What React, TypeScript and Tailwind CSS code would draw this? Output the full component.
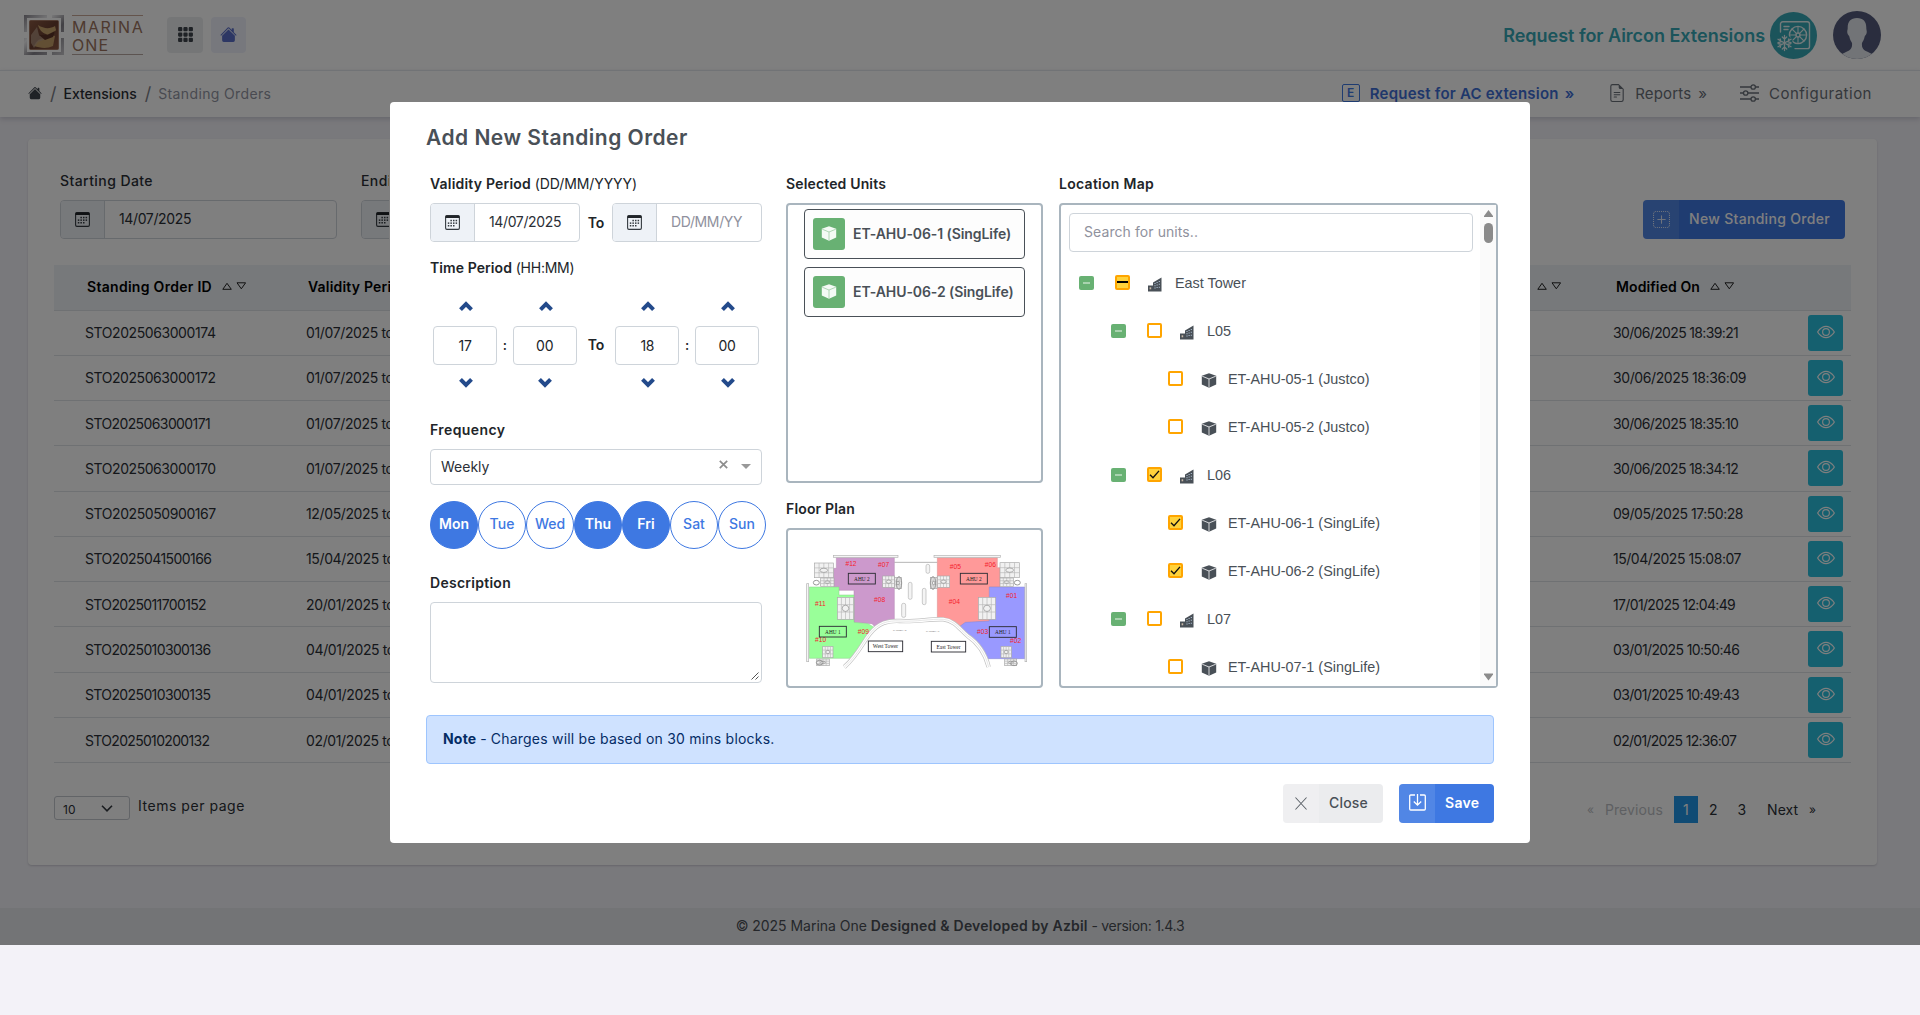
import React from "react";
import { BsGrid3X3GapFill, BsHouseFill, BsFileEarmarkText, BsEye, BsPlusSquareDotted } from "react-icons/bs";

const rows: [string, string, string, string, string][] = [
  ["STO2025063000174", "tracking-[-0.42px]", "01/07/2025 to", "30/06/2025 18:39:21", "tracking-[-0.65px]"],
  ["STO2025063000172", "tracking-[-0.44px]", "01/07/2025 to", "30/06/2025 18:36:09", "tracking-[-0.4px]"],
  ["STO2025063000171", "tracking-[-0.6px]", "01/07/2025 to", "30/06/2025 18:35:10", "tracking-[-0.65px]"],
  ["STO2025063000170", "tracking-[-0.43px]", "01/07/2025 to", "30/06/2025 18:34:12", "tracking-[-0.67px]"],
  ["STO2025050900167", "tracking-[-0.42px]", "12/05/2025 to", "09/05/2025 17:50:28", "tracking-[-0.48px]"],
  ["STO2025041500166", "tracking-[-0.55px]", "15/04/2025 to", "15/04/2025 15:08:07", "tracking-[-0.46px]"],
  ["STO2025011700152", "tracking-[-0.63px]", "20/01/2025 to", "17/01/2025 12:04:49", "tracking-[-0.65px]"],
  ["STO2025010300136", "tracking-[-0.62px]", "04/01/2025 to", "03/01/2025 10:50:46", "tracking-[-0.62px]"],
  ["STO2025010300135", "tracking-[-0.62px]", "04/01/2025 to", "03/01/2025 10:49:43", "tracking-[-0.65px]"],
  ["STO2025010200132", "tracking-[-0.68px]", "02/01/2025 to", "02/01/2025 12:36:07", "tracking-[-0.7px]"],
];

function CalendarIcon() {
  return (
    <svg width="15" height="15" viewBox="0 0 15 15">
      <rect x="0.6" y="0.6" width="13.8" height="13.8" rx="1.3" fill="none" stroke="#343a40" strokeWidth="1.1" />
      <path d="M0.5 1.5a1 1 0 0 1 1-1h12a1 1 0 0 1 1 1V3H0.5z" fill="#212529" />
      <g fill="#343a40">
        {[5.4, 8, 10.6].map((x) => <rect key={x} x={x} y="4.8" width="1.5" height="1.5" />)}
        {[2.8, 5.4, 8, 10.6].map((x) => <rect key={x} x={x} y="7.4" width="1.5" height="1.5" />)}
        {[2.8, 5.4, 8].map((x) => <rect key={x} x={x} y="10" width="1.5" height="1.5" />)}
      </g>
    </svg>
  );
}

function DateInput({ width, value, muted }: { width: string; value: string; muted?: boolean }) {
  return (
    <div className={`flex h-[39px] shrink-0 overflow-hidden rounded border border-[#ced4da] bg-white ${width}`}>
      <div className="flex w-11 items-center justify-center border-r border-[#ced4da] bg-[#eef2f7]">
        <CalendarIcon />
      </div>
      <div className={`pl-[14px] leading-[36px] tracking-[-0.37px] ${muted ? "text-[#8f919d]" : "text-[#2b2f36]"}`}>{value}</div>
    </div>
  );
}

function SortIcons() {
  return (
    <svg width="24" height="9" viewBox="0 0 24 9" fill="none" stroke="#222" strokeWidth="1">
      <path d="M5 1.3L9.3 7.3H0.8z" />
      <path d="M15 0.8h8.6L19.3 6.8z" />
    </svg>
  );
}

function Logo() {
  return (
    <svg width="40" height="40" viewBox="0 0 40 40">
      <defs>
        <linearGradient id="silver" x1="0" y1="0" x2="1" y2="1">
          <stop offset="0" stopColor="#8d8a92" /><stop offset="0.35" stopColor="#f2f2f4" /><stop offset="0.6" stopColor="#85828a" /><stop offset="1" stopColor="#c9c8cc" />
        </linearGradient>
        <linearGradient id="bronze" x1="0" y1="0" x2="1" y2="1">
          <stop offset="0" stopColor="#8c5a42" /><stop offset="0.5" stopColor="#6a3f30" /><stop offset="1" stopColor="#8e5a44" />
        </linearGradient>
      </defs>
      <path d="M0 0h23v3H3v14H0zM28 0h12v17h-3V3h-9zM0 23h3v14h20v3H0zM37 23h3v17H28v-3h9z" fill="url(#silver)" />
      <rect x="5.5" y="5.5" width="29" height="29" rx="1" fill="url(#bronze)" stroke="#a57b66" strokeWidth="1" />
      <path d="M14 10c6 4 12 4 17 1l1 4c-3 5-7 6-10 4-4-1-7-5-8-9z" fill="#c9a56c" />
      <path d="M10 31c3-6 6-8 11-7 4-2 8-4 10-3l-2 10c-6 3-13 2-19 0z" fill="#c49f68" />
      <path d="M7 20l6-8 2 8 7 4-8 3-4 6-3-5z" fill="#b59a86" opacity=".75" />
      <path d="M15 20l8 0 8-4-2 6-8 3z" fill="#5b3326" />
    </svg>
  );
}

function AirconBadge() {
  return (
    <svg width="47" height="47" viewBox="0 0 47 47">
      <circle cx="23.5" cy="23.5" r="23.5" fill="#36a9b6" />
      <g fill="none" stroke="#e6f3f4" strokeWidth="1.4" strokeLinecap="round">
        <path d="M10.5 20V12a2.2 2.2 0 0 1 2.2-2.2H37.3a2.2 2.2 0 0 1 2.2 2.2v22.4a2.2 2.2 0 0 1-2.2 2.2H25" />
        <path d="M14 14.5h5M14 17.5h4" />
        <circle cx="28" cy="23" r="8.6" />
        <circle cx="28" cy="23" r="2" />
        <path d="M28 14.6V21M28 25v6.4M19.6 23H26M30 23h6.4M22 17l4.6 4.6M29.4 24.4L34 29M34 17l-4.6 4.6M26.6 24.4L23 28" strokeWidth="1.1" />
      </g>
      <circle cx="14.5" cy="31" r="8.2" fill="#36a9b6" />
      <path d="M14.5 23.500v15M8 27.300l13 7.500M21 27.300l-13 7.500M12.300 25l2.200 2.200 2.200-2.200M12.300 37l2.200-2.200 2.200 2.200M8 30.600l3-.8-.8-3M21 31.500l-3 .8.8 3M21 30.600l-3-.8.8-3M8 31.500l3 .8-.8 3" fill="none" stroke="#e6f3f4" strokeWidth="1.3" strokeLinecap="round" />
    </svg>
  );
}

function Avatar() {
  return (
    <svg width="48" height="48" viewBox="0 0 48 48">
      <defs><clipPath id="face"><circle cx="24" cy="24" r="24" /></clipPath></defs>
      <g clipPath="url(#face)">
        <rect width="48" height="48" fill="#545b7c" />
        <path d="M24 7c-6.500 0-9.500 4-9.300 10 0 2-.9 3-.2 5.500.5 1.800 1.500 1.800 1.800 3 .6 3 1.600 4.500 2.700 6.500.5 5-1.500 7-5 8.500L5 45v6h38v-6l-9-4.500c-3.500-1.500-5.500-3.500-5-8.500 1.100-2 2.100-3.500 2.700-6.500.3-1.200 1.300-1.200 1.800-3 .7-2.500-.2-3.500-.2-5.500C33.500 11 30.500 7 24 7z" fill="#e4e8ee" />
      </g>
    </svg>
  );
}

function Chevron({ down }: { down?: boolean }) {
  return (
    <svg width="14" height="11" viewBox="0 0 14 11" fill="none" stroke="#234a8b" strokeWidth="4">
      <path d={down ? "M1.500 2.300L7 7.800l5.500-5.500" : "M1.500 8.700L7 3.200l5.500 5.500"} />
    </svg>
  );
}

function Spinner({ value }: { value: string }) {
  return (
    <div className="flex w-16 flex-col items-center">
      <div className="ml-[2px]"><Chevron /></div>
      <div className="mt-[14px] flex h-[39px] w-16 items-center justify-center rounded border border-[#ced4da] pb-px tracking-[-0.3px]">{value}</div>
      <div className="mt-3 ml-[1px]"><Chevron down /></div>
    </div>
  );
}

function CubeIcon({ color, line }: { color: string; line: string }) {
  return (
    <svg width="16" height="15" viewBox="0 0 16 15">
      <path d="M8 0.300l7.200 2.500v8.600L8 14.700.8 11.400V2.800z" fill={color} />
      <path d="M1.200 3.200L8 6l6.800-2.800M8 6v8.500" fill="none" stroke={line} strokeWidth="0.9" />
    </svg>
  );
}

function BuildingIcon() {
  return (
    <svg width="14" height="15" viewBox="0 0 14 15">
      <path d="M5 5.500L13.500 0.500V14.500H5z" fill="#495057" />
      <path d="M0 8.500h5v6H0z" fill="#495057" />
      <path d="M6.500 6h1v1h-1zM8.600 5h1v1h-1zM10.800 4h1v1h-1zM6.500 8.200h1v1h-1zM8.600 7.500h1v1h-1zM10.800 6.800h1v1h-1zM6.500 10.400h1v1h-1zM8.600 10h1v1h-1zM10.800 9.700h1v1h-1z" fill="#b9cbe0" />
      <path d="M1.600 10.300h1.600v2H1.600z" fill="#c9b9a8" />
    </svg>
  );
}

function Toggle() {
  return (
    <span className="flex h-[14px] w-[15px] items-center justify-center rounded-[2px] bg-[#68b173]">
      <span className="h-[2px] w-[7px] bg-[#a9d3af]" />
    </span>
  );
}

function Check({ state }: { state: "on" | "off" | "some" }) {
  return (
    <span className={`mb-[2px] flex size-[15px] items-center justify-center rounded-[2px] border-2 border-[#ffa500] ${state === "off" ? "bg-white" : "bg-[#ffd23b]"}`}>
      {state === "some" && <span className="h-[2px] w-[11px] shrink-0 bg-black" />}
      {state === "on" && (
        <svg width="11" height="11" viewBox="0 0 11 11" className="shrink-0"><path d="M1 5.800l3 2.900L10 1.900" fill="none" stroke="#111" strokeWidth="1.400" /></svg>
      )}
    </span>
  );
}

function Branch({ label, state, indent }: { label: string; state: "on" | "off" | "some"; indent: string }) {
  return (
    <div className={`flex h-12 items-center ${indent}`}>
      <Toggle />
      <span className="ml-[21px]"><Check state={state} /></span>
      <span className="mt-[3px] ml-[18px]"><BuildingIcon /></span>
      <span className="mt-px ml-[13px]">{label}</span>
    </div>
  );
}

function Leaf({ label, checked }: { label: string; checked?: boolean }) {
  return (
    <div className="flex h-12 items-center pl-[99px]">
      <Check state={checked ? "on" : "off"} />
      <span className="mt-[3px] ml-[18px]"><CubeIcon color="#495057" line="#e8e8ea" /></span>
      <span className="mt-px ml-[11px] whitespace-nowrap">{label}</span>
    </div>
  );
}

function Core({ x, y, w, h }: { x: number; y: number; w: number; h: number }) {
  return (
    <g fill="#f1f1f1" stroke="#a8a8a8" strokeWidth="2">
      <rect x={x} y={y} width={w} height={h} />
      <path d={`M${x} ${y + h / 3}h${w}M${x} ${y + (h * 2) / 3}h${w}M${x + w / 4} ${y}v${h}M${x + w / 2} ${y}v${h}M${x + (w * 3) / 4} ${y}v${h}`} stroke="#b8b8b8" />
      <ellipse cx={x + w / 2} cy={y + h / 2} rx={w / 5} ry={h / 7} stroke="#8c8c8c" />
    </g>
  );
}

function Tag({ x, y, w, h = 32, label }: { x: number; y: number; w: number; h?: number; label: string }) {
  return (
    <g>
      <rect x={x} y={y} width={w} height={h} fill="none" stroke="#2d2d35" strokeWidth="2.800" />
      <text x={x + w / 2} y={y + h / 2 + 6} textAnchor="middle" fontSize="16" fontFamily="Liberation Serif" fill="#222">{label}</text>
    </g>
  );
}

function FloorPlan() {
  const units: [string, number, number][] = [
    ["#12", 213, 214], ["#07", 311, 215], ["#08", 299, 322], ["#11", 121, 334], ["#09", 250, 417], ["#10", 122, 441],
    ["#05", 526, 222], ["#06", 631, 216], ["#04", 523, 327], ["#01", 695, 310], ["#03", 608, 418], ["#02", 707, 445],
  ];
  return (
    <svg width="253" height="156" viewBox="24 105 759 468">
      <path d="M343 202H472" stroke="#b5b5b5" strokeWidth="3" />
      <path d="M169 188H343V373C315 376 300 388 286 397L276 386L222 382V286H177V283H161V220H169Z" fill="#cc99cc" stroke="#b28bb2" strokeWidth="1.500" />
      <path d="M88 276H177V300H222V382L264 386L284 398C262 415 248 440 234 470C228 482 220 489 214 490H88Z" fill="#99ff99" stroke="#88cf88" strokeWidth="1.500" />
      <path d="M472 188H652V218H660V276H628V380L556 384L535 398C524 380 500 370 472 370Z" fill="#ff9999" stroke="#d98c8c" strokeWidth="1.500" />
      <path d="M628 276H734V491H622C614 470 592 440 570 428C553 418 542 408 534 398L556 382L628 378Z" fill="#9999ff" stroke="#8888cf" strokeWidth="1.500" />
      <g fill="#f4f4f4" stroke="#b4b4b4" strokeWidth="2">
        <rect x="160" y="181" width="194" height="6" /><rect x="462" y="181" width="199" height="6" />
        <rect x="80" y="266" width="6" height="234" /><rect x="735" y="266" width="5" height="234" />
        <rect x="438" y="208" width="11" height="27" rx="5" /><rect x="385" y="262" width="11" height="51" rx="5" />
        <rect x="427" y="280" width="11" height="49" rx="5" /><rect x="365" y="325" width="12" height="42" rx="5" />
      </g>
      <g fill="none">
        <path d="M193 516C232 482 247 445 268 418C296 382 325 376 360 378C410 381 450 371 490 373C525 377 538 402 562 422C595 444 616 476 626 516" stroke="#c2c2c2" strokeWidth="13" />
        <path d="M193 516C232 482 247 445 268 418C296 382 325 376 360 378C410 381 450 371 490 373C525 377 538 402 562 422C595 444 616 476 626 516" stroke="#ffffff" strokeWidth="9" />
        <path d="M193 516C232 482 247 445 268 418C296 382 325 376 360 378C410 381 450 371 490 373C525 377 538 402 562 422C595 444 616 476 626 516" stroke="#cfcfcf" strokeWidth="1.500" />
      </g>
      <Core x={103} y={204} w={57} h={44} /><Core x={122} y={249} w={40} h={25} />
      <Core x={308} y={243} w={36} h={34} /><Core x={344} y={247} w={20} h={34} />
      <Core x={172} y={307} w={49} h={66} /><Core x={128} y={454} w={31} h={34} /><Core x={110} y={492} w={38} h={20} />
      <Core x={451} y={247} w={20} h={34} /><Core x={472} y={243} w={37} h={34} />
      <Core x={660} y={203} w={58} h={45} /><Core x={660} y={249} w={40} h={25} />
      <Core x={595} y={307} w={52} h={66} /><Core x={663} y={454} w={31} h={34} /><Core x={674} y={492} w={36} h={20} />
      <g fill="none" stroke="#999" strokeWidth="3">
        <ellipse cx="109" cy="263" rx="9" ry="7" /><ellipse cx="357" cy="264" rx="8" ry="19" /><ellipse cx="459" cy="264" rx="8" ry="19" />
        <ellipse cx="712" cy="263" rx="9" ry="7" /><ellipse cx="119" cy="503" rx="10" ry="7" /><ellipse cx="702" cy="505" rx="10" ry="7" />
      </g>
      <g fontFamily="Liberation Sans" fontSize="20" fill="#f5222d" textAnchor="middle">
        {units.map(([t, x, y]) => <text key={t} x={x} y={y}>{t}</text>)}
      </g>
      <Tag x={205} y={235} w={81} label="AHU 2" />
      <Tag x={541} y={235} w={81} label="AHU 2" />
      <Tag x={118} y={394} w={81} label="AHU 1" />
      <Tag x={628} y={395} w={81} label="AHU 1" />
      <Tag x={265} y={438} w={103} label="West Tower" />
      <Tag x={454} y={439} w={103} label="East Tower" />
      <g fontFamily="Liberation Sans" fontSize="7.500" fill="#777"><text x="339" y="409">PARCEL A2</text><text x="438" y="410">PARCEL A1</text></g>
    </svg>
  );
}

function Page() {
  return (
    <div className="flex h-[945px] flex-col">
      <header className="flex h-[70px] items-center bg-white pl-6">
        <Logo />
        <div className="ml-2 flex h-10 w-[71px] flex-col justify-center border-y border-t-[#c9a998] border-b-[#b9a9a2] pt-[3px] text-[16px] leading-[17.500px] text-[#9c7460]">
          <span className="tracking-[1.500px]">MARINA</span>
          <span className="tracking-[1.100px]">ONE</span>
        </div>
        <div className="ml-6 flex h-9 w-9 items-center justify-center rounded bg-[#ebedef] pb-[2px] text-[#3f454c]"><BsGrid3X3GapFill size={17} /></div>
        <div className="ml-2 flex h-9 w-[35px] items-center justify-center rounded bg-[#eef1fb] pb-[2px] text-[#5a6ec8]"><BsHouseFill size={17} /></div>
        <div className="mr-[5px] ml-auto text-[18px] font-semibold tracking-[-0.02px] text-[#36a9b6]">Request for Aircon Extensions</div>
        <AirconBadge />
        <div className="mr-[39px] ml-4"><Avatar /></div>
      </header>
      <nav className="flex h-[47px] items-center border-t border-[#e3e6ec] bg-white pb-[2px] pl-[28px] shadow-[0_2px_5px_rgba(90,92,120,0.25)]">
        <BsHouseFill size={14} className="text-[#3f454c]" />
        <span className="ml-2 text-[18px] text-[#7c7f88]">/</span>
        <span className="ml-[7px] font-medium text-[#2b2f36]">Extensions</span>
        <span className="ml-[8px] text-[18px] text-[#7c7f88]">/</span>
        <span className="ml-[7px] tracking-[0.36px] text-[#9295a2]">Standing Orders</span>
        <div className="mr-[48px] ml-auto flex items-center text-[15px] text-[#6a7079]">
          <span className="flex h-[18px] w-[18px] items-center justify-center rounded-[2px] border border-[#3e78e2] text-[12px] leading-none font-semibold text-[#3e78e2]">E</span>
          <span className="ml-[10px] font-semibold tracking-[0.22px] text-[#3e6fd6]">Request for AC extension</span>
          <span className="ml-[6px] font-semibold text-[#3e6fd6]">»</span>
          <BsFileEarmarkText size={18} className="ml-[34px]" />
          <span className="ml-[9px] tracking-[0.15px]">Reports</span>
          <span className="ml-[7px]">»</span>
          <svg width="19" height="18" viewBox="0 0 19 18" fill="none" stroke="currentColor" strokeWidth="1.300" className="ml-[33px]">
            <path d="M0 3h11M15.500 3H19M0 9h3.500M8 9h11M0 15h11M15.500 15H19" />
            <circle cx="13.200" cy="3" r="2.200" /><circle cx="5.700" cy="9" r="2.200" /><circle cx="13.200" cy="15" r="2.200" />
          </svg>
          <span className="ml-[10px] tracking-[0.5px]">Configuration</span>
        </div>
      </nav>
      <main className="mt-[22px] mr-[43px] ml-[28px] h-[726px] rounded bg-white shadow-[0_1px_2px_rgba(90,92,110,0.25)]">
        <div className="flex pt-[31px] pl-8">
          <div>
            <div className="mb-[9px] leading-[21px] tracking-[0.42px] font-medium text-[#2b2f36]">Starting Date</div>
            <DateInput width="w-[277px]" value="14/07/2025" />
          </div>
          <div className="ml-6 w-[28px] overflow-hidden">
            <div className="mb-[9px] leading-[21px] tracking-[0.42px] font-medium text-[#2b2f36]">Endi</div>
            <DateInput width="w-[277px]" value="" />
          </div>
          <div className="mt-[30px] mr-8 ml-auto flex h-[39px] overflow-hidden rounded bg-[#3e78e2] font-medium text-white">
            <div className="flex w-9 items-center justify-center bg-white/10"><BsPlusSquareDotted size={17} className="opacity-80" /></div>
            <div className="w-[166px] pl-[10px] leading-[38px] tracking-[0.31px]">New Standing Order</div>
          </div>
        </div>
        <div className="mt-[26px] mr-[26px] ml-[26px]">
          <div className="flex h-[45.500px] items-center border-b border-[#dee2e6] bg-[#eef2f7] pb-[2px] text-black">
            <div className="flex w-[254px] items-center pl-[33px] font-semibold">
              <span className="tracking-[0.29px]">Standing Order ID</span>
              <span className="ml-[10px]"><SortIcons /></span>
            </div>
            <div className="w-[221px] font-semibold tracking-[0.200px]">Validity Period</div>
            <div className="ml-auto flex items-center">
              <SortIcons />
              <span className="ml-[55px] font-semibold tracking-[0.1px]">Modified On</span>
              <span className="mr-[117px] ml-[10px]"><SortIcons /></span>
            </div>
          </div>
          {rows.map(([id, idTrack, validity, modified, modTrack]) => (
            <div key={id} className="flex h-[45.280px] items-center border-b border-[#dee2e6] text-[#2b2f36]">
              <div className={`w-[252px] pl-[31px] ${idTrack}`}>{id}</div>
              <div className="tracking-[-0.37px]">{validity}</div>
              <div className={`ml-auto w-[195px] ${modTrack}`}>{modified}</div>
              <div className="mr-2 flex h-[36px] w-[35px] items-center justify-center rounded-[3px] bg-[#2bc0de] pb-[2px] text-white"><BsEye size={18} /></div>
            </div>
          ))}
          <div className="mt-[33px] flex items-start">
            <div className="flex h-[24px] w-[76px] items-center rounded-[3px] border border-[#c4c8ce] pl-2 text-[12px] text-[#2b2f36]">
              <span className="mt-[3px]">10</span>
              <svg width="12" height="7" viewBox="0 0 12 7" fill="none" stroke="#343a40" strokeWidth="1.600" className="ml-[26px]"><path d="M1 .8l5 5 5-5" /></svg>
            </div>
            <span className="ml-2 leading-[20px] tracking-[0.53px] text-[#2b2f36]">Items per page</span>
            <div className="mr-[35px] ml-auto flex h-[27px] items-center text-[#2b2f36]">
              <span className="text-[12px] text-[#bcbec4]">«</span>
              <span className="ml-[11px] tracking-[0.1px] text-[#bcbec4]">Previous</span>
              <span className="ml-[11px] flex h-[27px] w-6 items-center justify-center bg-[#2196e8] text-white">1</span>
              <span className="ml-[11px]">2</span>
              <span className="ml-[20px]">3</span>
              <span className="ml-[21px]">Next</span>
              <span className="ml-[11px] text-[12px]">»</span>
            </div>
          </div>
        </div>
      </main>
      <footer className="mt-auto h-[37px] bg-[#e7e9ec] text-center leading-[36px] text-[#4a4f56]">
        <span className="tracking-[-0.03px]">© 2025 Marina One </span>
        <b className="font-semibold tracking-[0.220px]">Designed &amp; Developed by Azbil</b>
        <span className="tracking-[-0.280px]"> - version: 1.4.3</span>
      </footer>
    </div>
  );
}

const days: [string, boolean][] = [["Mon", true], ["Tue", false], ["Wed", false], ["Thu", true], ["Fri", true], ["Sat", false], ["Sun", false]];

function Modal() {
  return (
    <div className="flex h-[741px] w-[1140px] flex-col rounded bg-white px-9 text-[#212529]">
      <h1 className="mt-[21px] text-[21px] leading-[30px] font-semibold tracking-[0.480px] text-[#495057]">Add New Standing Order</h1>
      <div className="mt-[19px] flex h-[516px] pl-1">
        <section className="w-[332px] shrink-0">
          <div className="h-[31px] leading-[24px]"><b className="font-semibold tracking-[0.200px]">Validity Period</b><span className="tracking-[-0.100px]"> (DD/MM/YYYY)</span></div>
          <div className="flex items-center justify-between">
            <DateInput width="w-[150px]" value="14/07/2025" />
            <b className="pb-px font-semibold">To</b>
            <DateInput width="w-[150px]" value="DD/MM/YY" muted />
          </div>
          <div className="mt-[14px] leading-[24px]"><b className="font-semibold tracking-[0.080px]">Time Period</b><span className="tracking-[-0.250px]"> (HH:MM)</span></div>
          <div className="mt-[21px] flex items-center justify-between px-[3px]">
            <Spinner value="17" /><b className="w-4 text-center font-medium">:</b><Spinner value="00" />
            <b className="mx-[11px] font-semibold">To</b>
            <Spinner value="18" /><b className="w-4 text-center font-medium">:</b><Spinner value="00" />
          </div>
          <div className="mt-[30px] leading-[24px] font-semibold tracking-[0.420px]">Frequency</div>
          <div className="mt-[7px] flex h-9 items-center rounded border border-[#ced4da] px-[10px] text-[#2b2f36]">
            <span className="pb-[2px]">Weekly</span>
            <svg width="9" height="9" viewBox="0 0 9 9" stroke="#8d8d8d" strokeWidth="1.700" className="mt-[-6px] ml-auto"><path d="M.8.8l7.400 7.400M8.200.8L.8 8.200" /></svg>
            <svg width="10" height="5" viewBox="0 0 10 5" className="mt-[-2px] ml-[13px]"><path d="M0 0h10L5 5z" fill="#999" /></svg>
          </div>
          <div className="mt-4 flex w-[336px]">
            {days.map(([d, on]) => (
              <span key={d} className={`flex size-12 shrink-0 items-center justify-center rounded-full border border-[#3e78e2] pb-[3px] ${on ? "bg-[#3e78e2] font-semibold text-white" : "font-medium text-[#3e78e2]"}`}>{d}</span>
            ))}
          </div>
          <div className="mt-[22px] leading-[24px] font-semibold tracking-[0.270px]">Description</div>
          <div className="mt-[7px] flex h-[81px] items-end justify-end rounded border border-[#ced4da] p-[2px]">
            <svg width="8" height="8" viewBox="0 0 8 8" stroke="#555" strokeWidth="1"><path d="M.5 7.500l7-7M4.500 7.500l3-3" /></svg>
          </div>
        </section>
        <section className="ml-[24px] w-[257px] shrink-0">
          <div className="h-[31px] leading-[24px] font-semibold tracking-[0.150px]">Selected Units</div>
          <div className="flex h-[280px] flex-col gap-2 rounded border-2 border-[#a9b5be] py-1 pr-4 pl-4">
            {["ET-AHU-06-1 (SingLife)", "ET-AHU-06-2 (SingLife)"].map((u) => (
              <div key={u} className="flex h-[50px] items-center rounded border border-[#495057] bg-[#fdfdfd] pl-2 font-semibold text-[#495057]">
                <span className="flex size-8 items-center justify-center rounded-[3px] bg-[#68b173] pb-[2px]"><CubeIcon color="#f4faf5" line="#a8d2ae" /></span>
                <span className="ml-2 pb-[2px] whitespace-nowrap tracking-[-0.080px]">{u}</span>
              </div>
            ))}
          </div>
          <div className="mt-[14px] h-[31px] leading-[24px] font-semibold tracking-[0.170px]">Floor Plan</div>
          <div className="h-[160px] rounded border-2 border-[#a9b5be]"><FloorPlan /></div>
        </section>
        <section className="ml-4 w-[439px] shrink-0">
          <div className="h-[31px] leading-[24px] font-semibold tracking-[0.280px]">Location Map</div>
          <div className="flex h-[485px] rounded border-2 border-[#a9b5be]">
            <div className="flex-1 overflow-hidden pt-2 pl-2">
              <div className="h-[39px] w-[404px] rounded border border-[#ced4da] pl-[14px] leading-[36px] tracking-[0.080px] text-[#8f919d]">Search for units..</div>
              <div className="mt-[7px] font-['Liberation_Sans',sans-serif] text-[14.400px] text-[#495057]">
                <Branch label="East Tower" state="some" indent="pl-[10px]" />
                <Branch label="L05" state="off" indent="pl-[42px]" />
                <Leaf label="ET-AHU-05-1 (Justco)" />
                <Leaf label="ET-AHU-05-2 (Justco)" />
                <Branch label="L06" state="on" indent="pl-[42px]" />
                <Leaf label="ET-AHU-06-1 (SingLife)" checked />
                <Leaf label="ET-AHU-06-2 (SingLife)" checked />
                <Branch label="L07" state="off" indent="pl-[42px]" />
                <Leaf label="ET-AHU-07-1 (SingLife)" />
              </div>
            </div>
            <div className="flex w-4 flex-col items-center bg-[#fafafa] py-[5px]">
              <svg width="9" height="8" viewBox="0 0 9 8"><path d="M4.500 0L9 6v1H0V6z" fill="#8b8b8b" /></svg>
              <div className="mt-[5px] h-5 w-[9px] rounded-full bg-[#8b8b8b]" />
              <svg width="9" height="8" viewBox="0 0 9 8" className="mt-auto"><path d="M4.500 7.500L9 1.500v-1H0v1z" fill="#8b8b8b" /></svg>
            </div>
          </div>
        </section>
      </div>
      <div className="mt-[27px] h-[49px] rounded border border-[#9ec5fe] bg-[#cfe2ff] pl-4 leading-[46px] text-[#052c65]">
        <b className="font-bold tracking-[0.200px]">Note</b> - <span className="tracking-[0.220px]">Charges will be based on 30 mins blocks.</span>
      </div>
      <div className="mt-[20px] flex justify-end">
        <div className="flex h-[39px] w-[100px] overflow-hidden rounded bg-[#ebecee] font-medium text-[#495057]">
          <div className="flex w-9 items-center justify-center bg-white/20 pb-px"><svg width="12" height="13" viewBox="0 0 13 14" stroke="#5a6067" strokeWidth="1.100"><path d="M.5.5l12 13M12.500.5l-12 13" /></svg></div>
          <span className="ml-[10px] leading-[38px] tracking-[0.200px]">Close</span>
        </div>
        <div className="ml-4 flex h-[39px] w-[95px] overflow-hidden rounded bg-[#3e78e2] font-semibold text-white">
          <div className="flex w-9 items-center justify-center bg-white/10 pb-[2px]">
            <svg width="17" height="17" viewBox="0 0 17 17" fill="none" stroke="#fff" strokeWidth="1.300"><path d="M6 1H1.700a1 1 0 0 0-1 1v13a1 1 0 0 0 1 1h13.600a1 1 0 0 0 1-1V2a1 1 0 0 0-1-1H11M8.500 0v11M4.800 7.500l3.700 3.700 3.700-3.700" /></svg>
          </div>
          <span className="ml-[10px] leading-[38px] tracking-[0.330px]">Save</span>
        </div>
      </div>
    </div>
  );
}

export default function App() {
  return (
    <div className="relative h-[1015px] w-[1920px] overflow-hidden bg-[#f3f2f8] font-['Inter',sans-serif] text-[14px] leading-[21px]">
      <Page />
      <div className="absolute inset-x-0 top-0 flex h-[945px] items-center justify-center bg-black/50">
        <Modal />
      </div>
    </div>
  );
}
